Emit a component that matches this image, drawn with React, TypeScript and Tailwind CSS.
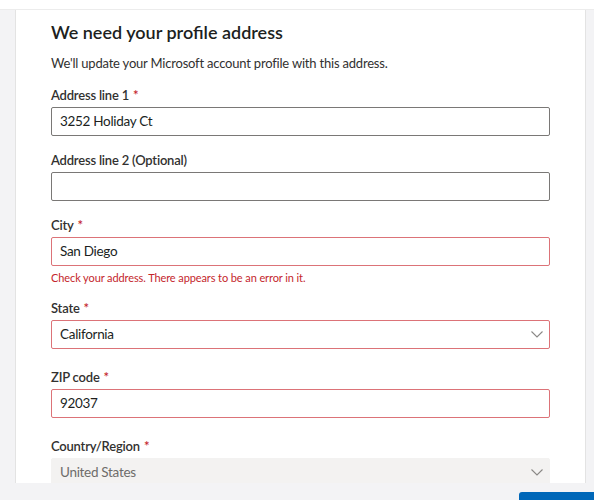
import React from 'react';

const font = { fontFamily: 'Lato, "Noto Sans", Arial, sans-serif' };

function Chevron() {
  return (
    <svg width="12" height="7" viewBox="0 0 12 7" className="shrink-0">
      <polyline points="0.5,0.5 6,6 11.5,0.5" fill="none" stroke="#8a8886" strokeWidth="1.1" />
    </svg>
  );
}

interface FieldProps {
  label: string;
  required?: boolean;
  value?: string;
  error?: boolean;
  select?: boolean;
  disabled?: boolean;
  message?: string;
  className?: string;
}

function Field({ label, required, value, error, select, disabled, message, className }: FieldProps) {
  const box = disabled
    ? 'bg-[#f3f2f1] border border-[#f3f2f1] text-[#6e6c6a]'
    : error
      ? 'bg-white border border-[#dc7378] text-[#201f1e]'
      : 'bg-white border border-[#7a7876] text-[#201f1e]';

  return (
    <div className={className}>
      <div className="text-[13px] leading-[20px] font-semibold tracking-[-0.2px] text-[#323130] mb-[2px]">
        {label}
        {required && <span className="text-[#c4262c] ml-[4px]">*</span>}
      </div>
      <div
        className={`h-[29px] rounded-[2px] flex items-center justify-between pl-[8px] pr-[6px] text-[13.5px] tracking-[-0.3px] ${box}`}
      >
        <span>{value}</span>
        {select && <Chevron />}
      </div>
      {message && (
        <div className="text-[11px] leading-[16px] tracking-[-0.1px] text-[#c4262c] mt-[4px]">{message}</div>
      )}
    </div>
  );
}

export default function App() {
  return (
    <div className="w-[594px] h-[500px] flex flex-col bg-white overflow-hidden" style={font}>
      <div className="h-[10px] bg-white border-b border-[#ececec]" />
      <div className="flex-1 bg-[#f3f3f5] flex overflow-hidden">
        <div className="ml-[15px] w-[571px] bg-white border-l border-r border-[#e3e3e3] pl-[35px] pr-[35px] pt-[8px]">
          <h1 className="text-[18px] leading-[28px] font-semibold text-[#201f1e]">
            We need your profile address
          </h1>
          <p className="mt-[7px] text-[13px] leading-[20px] tracking-[-0.2px] text-[#323130]">
            We'll update your Microsoft account profile with this address.
          </p>
          <Field className="mt-[12px]" label="Address line 1" required value="3252 Holiday Ct" />
          <Field className="mt-[14px]" label="Address line 2 (Optional)" />
          <Field
            className="mt-[14px]"
            label="City"
            required
            value="San Diego"
            error
            message="Check your address. There appears to be an error in it."
          />
          <Field className="mt-[12px]" label="State" required value="California" error select />
          <Field className="mt-[18px]" label="ZIP code" required value="92037" error />
          <Field className="mt-[18px]" label="Country/Region" required value="United States" select disabled />
        </div>
      </div>
      <div className="h-[17px] bg-[#f3f3f5] flex justify-end items-end">
        <div className="w-[75px] h-[8px] bg-[#0067b8] rounded-tl-[3px]" />
      </div>
    </div>
  );
}
